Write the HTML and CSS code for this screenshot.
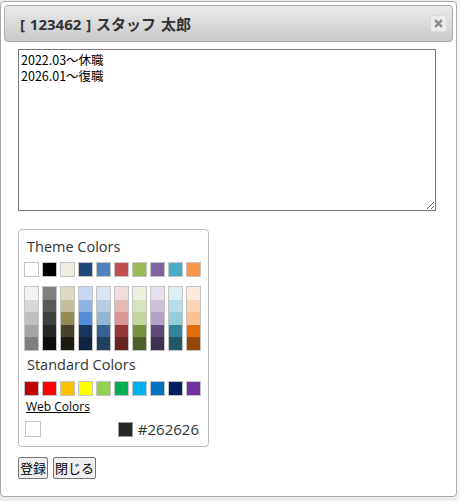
FILE: index.html
```html
<!DOCTYPE html>
<html lang="ja">
<head>
<meta charset="utf-8">
<link rel="stylesheet" href="styles.css">
</head>
<body>
<div class="page">
  <div class="dialog">
    <div class="titlebar">
      <span class="title">[ 123462 ] スタッフ 太郎</span>
      <span class="close"><svg width="9" height="9" viewBox="0 0 9 9"><path d="M1.2 1.2 L7.8 7.8 M7.8 1.2 L1.2 7.8" stroke="#8a8a8a" stroke-width="2.4" stroke-linecap="butt"/></svg></span>
    </div>
    <div class="content">
      <textarea class="memo">2022.03～休職
2026.01～復職</textarea>
      <div class="picker">
        <div class="label">Theme Colors</div>
        <div class="row">
          <span class="sw" style="background:#ffffff"></span>
          <span class="sw" style="background:#000000"></span>
          <span class="sw" style="background:#eeece1"></span>
          <span class="sw" style="background:#1f497d"></span>
          <span class="sw" style="background:#4f81bd"></span>
          <span class="sw" style="background:#c0504d"></span>
          <span class="sw" style="background:#9bbb59"></span>
          <span class="sw" style="background:#8064a2"></span>
          <span class="sw" style="background:#4bacc6"></span>
          <span class="sw" style="background:#f79646"></span>
        </div>
        <div class="shades">
          <div class="col"><i style="background:#f2f2f2"></i><i style="background:#d8d8d8"></i><i style="background:#bfbfbf"></i><i style="background:#a5a5a5"></i><i style="background:#7f7f7f"></i></div>
          <div class="col"><i style="background:#7f7f7f"></i><i style="background:#595959"></i><i style="background:#3f3f3f"></i><i style="background:#262626"></i><i style="background:#0c0c0c"></i></div>
          <div class="col"><i style="background:#ddd9c3"></i><i style="background:#c4bd97"></i><i style="background:#938953"></i><i style="background:#494429"></i><i style="background:#1d1b10"></i></div>
          <div class="col"><i style="background:#c6d9f0"></i><i style="background:#8db3e2"></i><i style="background:#548dd4"></i><i style="background:#17365d"></i><i style="background:#0f243e"></i></div>
          <div class="col"><i style="background:#dbe5f1"></i><i style="background:#b8cce4"></i><i style="background:#95b3d7"></i><i style="background:#366092"></i><i style="background:#244061"></i></div>
          <div class="col"><i style="background:#f2dcdb"></i><i style="background:#e5b9b7"></i><i style="background:#d99694"></i><i style="background:#953734"></i><i style="background:#632423"></i></div>
          <div class="col"><i style="background:#ebf1dd"></i><i style="background:#d7e3bc"></i><i style="background:#c3d69b"></i><i style="background:#76923c"></i><i style="background:#4f6128"></i></div>
          <div class="col"><i style="background:#e5e0ec"></i><i style="background:#ccc1d9"></i><i style="background:#b2a2c7"></i><i style="background:#5f497a"></i><i style="background:#3f3151"></i></div>
          <div class="col"><i style="background:#dbeef3"></i><i style="background:#b7dde8"></i><i style="background:#92cddc"></i><i style="background:#31859b"></i><i style="background:#205867"></i></div>
          <div class="col"><i style="background:#fdeada"></i><i style="background:#fbd5b5"></i><i style="background:#fac08f"></i><i style="background:#e36c09"></i><i style="background:#974806"></i></div>
        </div>
        <div class="label label2">Standard Colors</div>
        <div class="row row2">
          <span class="sw" style="background:#c00000"></span>
          <span class="sw" style="background:#ff0000"></span>
          <span class="sw" style="background:#ffc000"></span>
          <span class="sw" style="background:#ffff00"></span>
          <span class="sw" style="background:#92d050"></span>
          <span class="sw" style="background:#00b050"></span>
          <span class="sw" style="background:#00b0f0"></span>
          <span class="sw" style="background:#0070c0"></span>
          <span class="sw" style="background:#002060"></span>
          <span class="sw" style="background:#7030a0"></span>
        </div>
        <a class="web" href="#">Web Colors</a>
        <div class="current">
          <span class="empty"></span>
          <span class="sel"><span class="sw dark"></span><span class="hex">#262626</span></span>
        </div>
      </div>
      <div class="buttons">
        <button class="btn">登録</button>
        <button class="btn">閉じる</button>
      </div>
    </div>
  </div>
  <div class="strip"></div>
</div>
</body>
</html>
```

FILE: styles.css
```css
html, body {
  margin: 0;
  padding: 0;
}
body {
  background: #ececec;
  font-family: "Open Sans", "Noto Sans CJK JP", sans-serif;
  width: 460px;
  height: 501px;
  overflow: hidden;
}
.page {
  display: flex;
  align-items: flex-start;
}
.dialog {
  width: 457px;
  height: 496px;
  box-sizing: border-box;
  margin-top: 1px;
  border: 1px solid #a9a9a9;
  border-radius: 4px;
  background: #fff;
  padding: 3px;
  flex: none;
}
.strip {
  width: 3px;
  height: 501px;
  background: #f7f7f7;
}
.titlebar {
  height: 37px;
  box-sizing: border-box;
  border: 1px solid #aaaaaa;
  border-radius: 4px;
  background: linear-gradient(#e9e9e9, #d9d9d9 55%, #c9c9c9);
  display: flex;
  align-items: center;
  justify-content: space-between;
  padding-left: 15px;
  padding-right: 5px;
}
.title {
  font-family: "Open Sans", "Noto Sans CJK JP", sans-serif;
  font-weight: bold;
  font-size: 15px;
  word-spacing: 1px;
  color: #333;
}
.close {
  width: 17px;
  height: 17px;
  box-sizing: border-box;
  border-radius: 3px;
  background: #ebebeb;
  border: 1px solid #dadada;
  display: flex;
  align-items: center;
  justify-content: center;
  margin-top: -1px;
}
.content {
  padding: 7px 0 0 14px;
}
.memo {
  display: block;
  width: 418px;
  height: 162px;
  box-sizing: border-box;
  margin: 0;
  border: 1px solid #767676;
  padding: 2px;
  font-family: "Noto Sans CJK JP", sans-serif;
  font-size: 12.5px;
  line-height: 16px;
  color: #000;
  outline: none;
}
.picker {
  margin-top: 18px;
  width: 191px;
  box-sizing: border-box;
  border: 1px solid #bbbbbb;
  border-radius: 4px;
  padding: 8px 5px 9px 5px;
  display: flex;
  flex-direction: column;
  align-items: flex-start;
}
.label {
  font-size: 14.5px;
  line-height: 18px;
  color: #333;
  padding-left: 3px;
}
.label2 {
  margin-top: 5px;
}
.row {
  display: flex;
  gap: 3px;
  margin-top: 6px;
}
.row2 {
  margin-top: 7px;
}
.sw {
  display: block;
  width: 15px;
  height: 15px;
  box-sizing: border-box;
  border: 1px solid #c4c4c4;
}
.shades {
  display: flex;
  gap: 3px;
  margin-top: 9px;
}
.col {
  width: 15px;
  height: 65px;
  box-sizing: border-box;
  border: 1px solid #c4c4c4;
  display: flex;
  flex-direction: column;
}
.col i {
  flex: 1;
  display: block;
}
.web {
  margin-top: 3px;
  font-size: 12px;
  line-height: 16px;
  color: #000;
  text-decoration: underline;
  padding-left: 2px;
}
.current {
  margin-top: 6px;
  width: 100%;
  height: 16px;
  display: flex;
  align-items: center;
  justify-content: space-between;
  box-sizing: border-box;
  padding-left: 1px;
  padding-right: 4px;
}
.empty {
  width: 16px;
  height: 16px;
  box-sizing: border-box;
  border: 1px solid #c4c4c4;
  background: #fff;
}
.sel {
  display: flex;
  align-items: center;
  gap: 5px;
}
.dark {
  background: #262626;
  border-color: #9a9a9a;
}
.hex {
  font-size: 15px;
  line-height: 16px;
  color: #333;
}
.buttons {
  margin-top: 10px;
  display: flex;
  gap: 5px;
}
.btn {
  margin: 0;
  height: 22px;
  box-sizing: border-box;
  padding: 1px 1px;
  border: 1px solid #767676;
  border-radius: 2px;
  background: #efefef;
  font-family: "Noto Sans CJK JP", sans-serif;
  font-size: 13px;
  line-height: 18px;
  color: #000;
}
```
